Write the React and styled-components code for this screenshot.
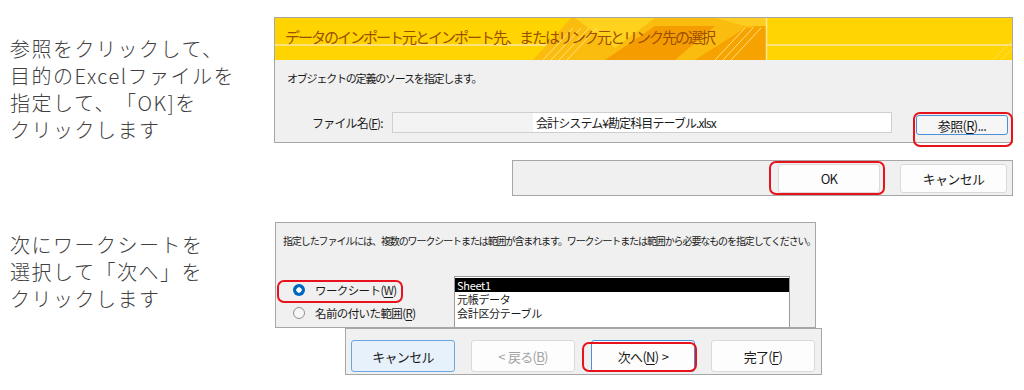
import React from 'react';
import styled, { createGlobalStyle } from 'styled-components';

const GlobalStyle = createGlobalStyle`
  html, body {
    margin: 0;
    padding: 0;
    background: #fff;
  }
  body {
    width: 1024px;
    height: 390px;
    overflow: hidden;
    font-family: "Noto Sans CJK JP", "Noto Sans", sans-serif;
    text-spacing-trim: space-all;
  }
`;

const Page = styled.div`
  width: 1024px;
  height: 390px;
  box-sizing: border-box;
  padding-top: 17px;
  display: flex;
  flex-direction: column;
`;

const Section = styled.section`
  display: flex;
  margin-top: ${p => p.$gap || 0}px;
`;

const Note = styled.p`
  margin: 0;
  width: 274px;
  flex: none;
  box-sizing: border-box;
  padding: ${p => p.$top}px 0 0 10px;
  font-size: 20px;
  line-height: 27px;
  font-weight: 300;
  letter-spacing: 1.5px;
  color: #404040;
  white-space: pre-line;
`;

const Shots = styled.div`
  display: flex;
  flex-direction: column;
  align-items: flex-start;
`;

// ---- dialog frames
const Frame = styled.div`
  box-sizing: border-box;
  width: ${p => p.$w}px;
  height: ${p => p.$h}px;
  margin-left: ${p => p.$left || 0}px;
  margin-top: ${p => p.$top || 0}px;
  align-self: ${p => (p.$end ? 'flex-end' : 'auto')};
  border: 1px solid #a6a6a6;
  background: #f0f0f0;
  color: #1a1a1a;
  display: flex;
  flex-direction: column;
`;

const Header = styled.div`
  position: relative;
  height: 42px;
  flex: none;
  overflow: hidden;
  background: linear-gradient(to bottom, #ffd400 0 26px, #ffe27a 26px 28px, #ffd400 28px);
`;

const HeaderArt = styled.svg`
  position: absolute;
  inset: 0;
  width: 100%;
  height: 100%;
`;

const Title = styled.h1`
  position: relative;
  margin: 0;
  padding: 10px 0 0 10px;
  font-size: 15px;
  line-height: 18px;
  font-weight: 400;
  letter-spacing: -2px;
  color: #9c4f00;
`;

const Body = styled.div`
  padding: 10px 4px 0 0;
  display: flex;
  flex-direction: column;
`;

const Lead = styled.p`
  margin: 0;
  padding-left: ${p => p.$pad}px;
  font-size: ${p => p.$size}px;
  line-height: ${p => p.$lh}px;
  letter-spacing: ${p => p.$ls}px;
  white-space: nowrap;
`;

const FileRow = styled.div`
  margin-top: 26px;
  display: flex;
  align-items: flex-start;
`;

const FieldLabel = styled.label`
  width: 80px;
  margin-left: 37px;
  font-size: 12px;
  line-height: 21px;
  letter-spacing: -0.8px;
`;

const PathField = styled.div`
  box-sizing: border-box;
  width: 500px;
  height: 21px;
  border: 1px solid #cfcfcf;
  background: linear-gradient(to right, #f3f3f3 0 140px, #fff 140px);
  font-size: 12px;
  line-height: 19px;
  letter-spacing: -0.9px;
  padding-left: 143px;
  white-space: nowrap;
`;

const Anchor = styled.div`
  position: relative;
  display: flex;
  margin-left: ${p => p.$left || 0}px;
  margin-top: ${p => p.$top || 0}px;
`;

const Mark = styled.span`
  position: absolute;
  inset: ${p => p.$inset};
  border: 2px solid #e8121c;
  border-radius: 7px;
  pointer-events: none;
`;

const Button = styled.button`
  box-sizing: border-box;
  width: ${p => p.$w}px;
  height: ${p => p.$h}px;
  padding: 0;
  border-radius: 3px;
  font-family: inherit;
  font-size: 13px;
  letter-spacing: -0.7px;
  word-spacing: 1px;
  color: ${p => (p.$state === 'disabled' ? '#a3a3a3' : '#1a1a1a')};
  background: ${p => (p.$state === 'default' ? '#e6f1fc' : p.$state === 'browse' ? '#f6f6f6' : '#fdfdfd')};
  border: 1px solid
    ${p =>
      p.$state === 'default'
        ? '#6aa6e2'
        : p.$state === 'focus' || p.$state === 'browse'
        ? '#4a90d9'
        : '#dadada'};
  u {
    text-decoration: underline;
    text-underline-offset: 2px;
  }
`;

const ButtonBar = styled.div`
  flex: 1;
  display: flex;
  align-items: ${p => (p.$top ? 'flex-start' : 'center')};
  justify-content: ${p => (p.$right ? 'flex-end' : 'flex-start')};
  gap: ${p => p.$gap}px;
  padding: ${p => p.$pad};
`;

// ---- worksheet picker
const Picker = styled.div`
  padding: 11px 0 0 7px;
  display: flex;
  flex-direction: column;
  flex: 1;
`;

const PickRow = styled.div`
  margin-top: 28px;
  flex: 1;
  display: flex;
`;

const Options = styled.div`
  width: 171px;
  padding-top: 2px;
`;

const Option = styled.div`
  position: relative;
  height: 23px;
  display: flex;
  align-items: center;
  gap: 10px;
  padding-left: 10px;
  font-size: 11.5px;
  letter-spacing: -0.6px;
  u {
    text-underline-offset: 2px;
  }
`;

const Radio = styled.span`
  width: 12px;
  height: 12px;
  border-radius: 50%;
  box-sizing: border-box;
  flex: none;
  ${p =>
    p.$on
      ? 'background: radial-gradient(circle, #fff 0 2.4px, #0067c0 3px);'
      : 'background: #f6f6f6; border: 1px solid #8f8f8f;'}
`;

const SheetList = styled.ul`
  list-style: none;
  margin: 0;
  padding: 1px 0 0;
  width: 336px;
  box-sizing: border-box;
  background: #fff;
  border: 1px solid #9a9a9a;
  border-bottom: none;
`;

const Sheet = styled.li`
  height: 14px;
  line-height: 14px;
  padding-left: 2px;
  font-size: 11px;
  letter-spacing: -0.3px;
  background: ${p => (p.$sel ? '#000' : 'transparent')};
  color: ${p => (p.$sel ? '#fff' : '#1a1a1a')};
`;

function ImportHeader() {
  return (
    <Header>
      <HeaderArt viewBox="0 0 737 42" preserveAspectRatio="none">
        <polygon points="258,42 296,0 492,0 492,42" fill="#fbbc10" />
        <polygon points="300,0 380,0 340,30" fill="#ffd21e" />
        <polygon points="330,42 380,8 440,8 400,42" fill="#f59c00" />
        <polygon points="392,0 470,0 492,22 492,0" fill="#f7a800" />
        <polygon points="420,42 470,10 492,10 492,42" fill="#f6a200" />
        <polygon points="440,0 492,0 492,8 470,8" fill="#ffcc22" />
        <line x1="268" y1="42" x2="298" y2="10" stroke="#ffe27a" strokeWidth="1" />
        <line x1="276" y1="42" x2="306" y2="10" stroke="#ffe27a" strokeWidth="1" />
        <line x1="284" y1="42" x2="314" y2="10" stroke="#ffe27a" strokeWidth="1" />
        <line x1="292" y1="42" x2="322" y2="10" stroke="#ffe27a" strokeWidth="1" />
        <line x1="440" y1="42" x2="470" y2="10" stroke="#ffe27a" strokeWidth="1" />
        <line x1="448" y1="42" x2="478" y2="10" stroke="#ffe27a" strokeWidth="1" />
        <line x1="456" y1="42" x2="486" y2="10" stroke="#ffe27a" strokeWidth="1" />
        <line x1="491.5" y1="0" x2="491.5" y2="42" stroke="#ffe89a" strokeWidth="1.5" />
        <line x1="718" y1="42" x2="737" y2="23" stroke="#ffe27a" strokeWidth="1" opacity="0.7" />
        <line x1="726" y1="42" x2="737" y2="31" stroke="#ffe27a" strokeWidth="1" opacity="0.7" />
      </HeaderArt>
      <Title>データのインポート元とインポート先、またはリンク元とリンク先の選択</Title>
    </Header>
  );
}

export default function App() {
  return (
    <Page>
      <GlobalStyle />
      <Section>
        <Note $top={17.5}>
          {'参照をクリックして、\n目的のExcelファイルを\n指定して、「OK]を\nクリックします'}
        </Note>
        <Shots>
          <Frame $w={739} $h={126}>
            <ImportHeader />
            <Body>
              <Lead $pad={12} $size={11} $lh={16} $ls={-1.2}>
                オブジェクトの定義のソースを指定します。
              </Lead>
              <FileRow>
                <FieldLabel>
                  ファイル名(<u>F</u>):
                </FieldLabel>
                <PathField>会計システム¥勘定科目テーブル.xlsx</PathField>
                <Anchor $left={24} $top={3}>
                  <Button $w={92} $h={20} $state="browse">
                    参照(<u>R</u>)...
                  </Button>
                  <Mark $inset="-3px -5px -12px -3px" />
                </Anchor>
              </FileRow>
            </Body>
          </Frame>
          <Frame $w={501} $h={36} $top={17} $end>
            <ButtonBar $right $gap={20} $pad="0 5px 0 0">
              <Anchor>
                <Button $w={102} $h={29} $state="plain">
                  OK
                </Button>
                <Mark $inset="-3px -5px -2px -9px" />
              </Anchor>
              <Button $w={107} $h={29} $state="plain">
                キャンセル
              </Button>
            </ButtonBar>
          </Frame>
        </Shots>
      </Section>

      <Section $gap={26}>
        <Note $top={8.5}>{'次にワークシートを\n選択して「次へ」を\nクリックします'}</Note>
        <Shots>
          <Frame $w={541} $h={106} $left={1}>
            <Picker>
              <Lead $pad={0} $size={10} $lh={14} $ls={-1.1}>
                指定したファイルには、複数のワークシートまたは範囲が含まれます。ワークシートまたは範囲から必要なものを指定してください。
              </Lead>
              <PickRow>
                <Options>
                  <Option>
                    <Radio $on />
                    <span>
                      ワークシート(<u>W</u>)
                    </span>
                    <Mark $inset="2px 51px -2px -6px" />
                  </Option>
                  <Option>
                    <Radio />
                    <span>
                      名前の付いた範囲(<u>R</u>)
                    </span>
                  </Option>
                </Options>
                <SheetList>
                  <Sheet $sel>Sheet1</Sheet>
                  <Sheet>元帳データ</Sheet>
                  <Sheet>会計区分テーブル</Sheet>
                </SheetList>
              </PickRow>
            </Picker>
          </Frame>
          <Frame $w={477} $h={47} $left={71}>
            <ButtonBar $top $gap={16} $pad="11px 0 0 5px">
              <Button $w={104} $h={32} $state="default">
                キャンセル
              </Button>
              <Button $w={104} $h={32} $state="disabled">
                &lt; 戻る(<u>B</u>)
              </Button>
              <Anchor>
                <Button $w={104} $h={32} $state="focus">
                  次へ(<u>N</u>) &gt;
                </Button>
                <Mark $inset="2px -2px 0 -9px" />
              </Anchor>
              <Button $w={104} $h={32} $state="plain">
                完了(<u>F</u>)
              </Button>
            </ButtonBar>
          </Frame>
        </Shots>
      </Section>
    </Page>
  );
}
